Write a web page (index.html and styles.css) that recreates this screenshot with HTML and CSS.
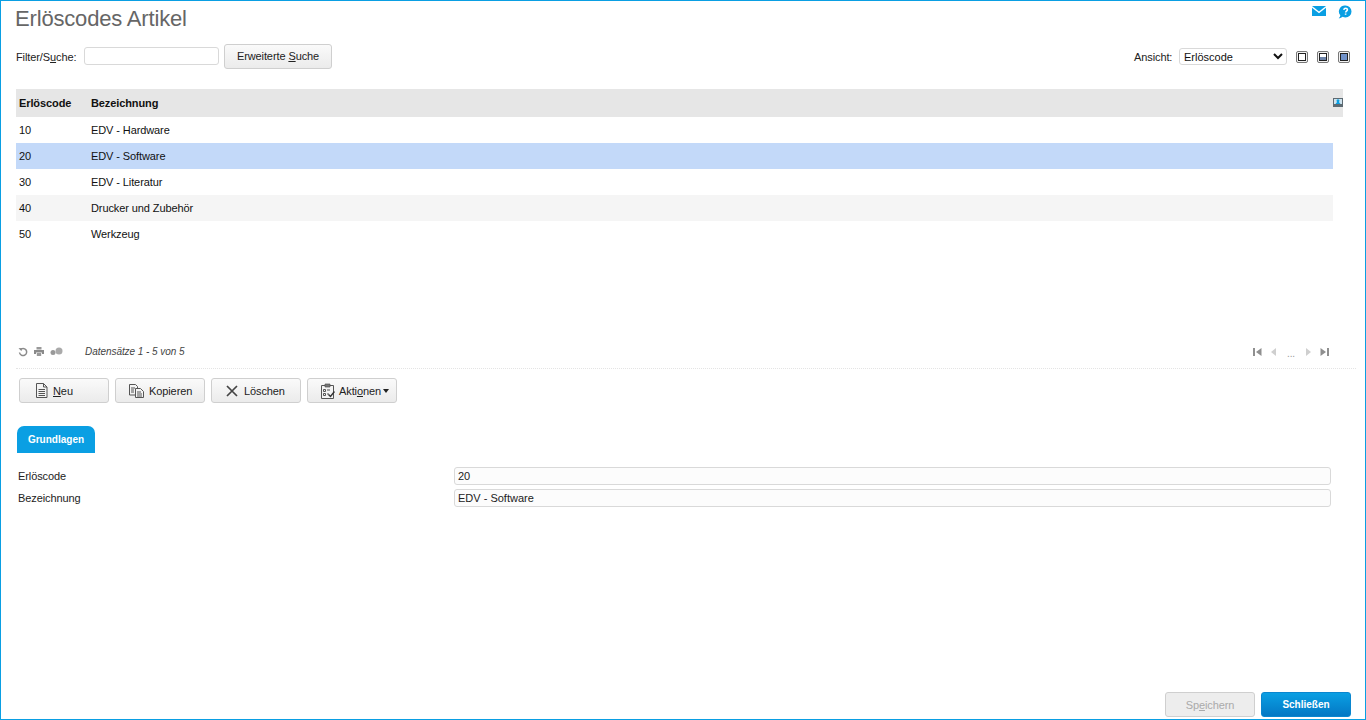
FILE: index.html
```html
<!DOCTYPE html>
<html lang="de">
<head>
<meta charset="utf-8">
<title>Erlöscodes Artikel</title>
<link rel="stylesheet" href="styles.css">
</head>
<body>
<div class="frame">
  <header class="head">
    <h1 class="title">Erlöscodes Artikel</h1>
    <div class="top-icons">
      <svg class="ic-mail" width="14" height="10" viewBox="0 0 14 10"><path d="M0 0h14L7 5.500z" fill="#0a9fe3"/><path d="M0 1.800 7 7.200l7-5.400V10H0z" fill="#0a9fe3"/></svg>
      <svg class="ic-help" width="14" height="14" viewBox="0 0 14 14"><path d="M7.500 0.500a6 6 0 0 1 0 12c-1 0-2-.2-2.800-.7-1 .9-2.500 1.500-4 1.500 1-.8 1.500-1.800 1.600-3A6 6 0 0 1 7.500.5z" fill="#0a9fe3"/><path d="M5.800 4.800c.2-1 .9-1.500 1.800-1.500 1.100 0 1.800.6 1.800 1.500 0 1.400-1.700 1.400-1.700 2.700M7.600 8.600v1.200" fill="none" stroke="#fff" stroke-width="1.600"/></svg>
    </div>
  </header>

  <div class="toolbar">
    <label class="lbl" for="q">Filter/S<u>u</u>che:</label>
    <input id="q" class="search" type="text">
    <button class="btn btn-search" type="button">Erweiterte <u>S</u>uche</button>
    <div class="view">
      <label class="lbl-view" for="v">Ansicht:</label>
      <select id="v" class="view-select"><option>Erlöscode</option></select>
      <span class="layout-btn"><i class="pane"></i></span>
      <span class="layout-btn"><i class="pane pane-half"></i></span>
      <span class="layout-btn"><i class="pane pane-full"></i></span>
    </div>
  </div>

  <section class="grid">
    <div class="grid-head">
      <span class="col-a">Erlöscode</span>
      <span class="col-b">Bezeichnung</span>
      <svg class="ic-cols" width="10" height="9" viewBox="0 0 10 9"><rect width="10" height="9" fill="#5d6a72"/><rect x="1" y="1" width="8" height="5" fill="#cfe3ee"/><path d="M5 1.200a1.500 1.500 0 0 1 1.500 1.500c0 .6-.3 1-.6 1.300l1.600 2H2.500l1.600-2c-.3-.3-.6-.7-.6-1.300A1.500 1.500 0 0 1 5 1.200z" fill="#0a9fe3"/></svg>
    </div>
    <div class="row"><span class="col-a">10</span><span class="col-b">EDV - Hardware</span></div>
    <div class="row row-sel"><span class="col-a">20</span><span class="col-b">EDV - Software</span></div>
    <div class="row"><span class="col-a">30</span><span class="col-b">EDV - Literatur</span></div>
    <div class="row row-alt"><span class="col-a">40</span><span class="col-b">Drucker und Zubehör</span></div>
    <div class="row"><span class="col-a">50</span><span class="col-b">Werkzeug</span></div>
  </section>

  <div class="pager">
    <div class="pager-tools">
      <svg width="10" height="10" viewBox="0 0 10 10"><path d="M2.200 2.800A3.600 3.600 0 1 1 1.500 5.500" fill="none" stroke="#8a8a8a" stroke-width="1.500"/><path d="M0.500 1l3.500.3-.5 3z" fill="#8a8a8a"/></svg>
      <svg width="10" height="9" viewBox="0 0 10 9"><path d="M2.500 0h5v2.500h-5z" fill="#999"/><path d="M0 3h10v4H8V5.500H2V7H0z" fill="#8a8a8a"/><path d="M2.800 6h4.400v3H2.800z" fill="#999"/></svg>
      <svg width="13" height="9" viewBox="0 0 13 9"><circle cx="3" cy="5.500" r="2.500" fill="#999"/><circle cx="9" cy="4" r="3.500" fill="#aaa"/></svg>
    </div>
    <span class="records">Datensätze 1 - 5 von 5</span>
    <div class="pager-nav">
      <svg width="9" height="8" viewBox="0 0 9 8"><path d="M0 0h2v8H0zM8.500 0v8L3 4z" fill="#8f8f8f"/></svg>
      <svg width="6" height="8" viewBox="0 0 6 8"><path d="M5 0v8L0 4z" fill="#cfcfcf"/></svg>
      <span class="dots">...</span>
      <svg width="6" height="8" viewBox="0 0 6 8"><path d="M1 0v8l5-4z" fill="#cfcfcf"/></svg>
      <svg width="9" height="8" viewBox="0 0 9 8"><path d="M9 0H7v8h2zM.5 0v8L6 4z" fill="#8f8f8f"/></svg>
    </div>
  </div>

  <div class="actions">
    <button class="btn btn-act btn-new" type="button">
      <svg width="13" height="15" viewBox="0 0 13 15"><path d="M1.500.5h7l3.500 3.500v10.500H1.500z" fill="#f4f4f4" stroke="#555"/><path d="M8.500.5V4H12M3.500 6.500h6.500M3.500 8.500h6.500M3.500 10.500h6.500M3.500 12.500h6.500" fill="none" stroke="#555"/></svg>
      <span><u>N</u>eu</span>
    </button>
    <button class="btn btn-act btn-copy" type="button">
      <svg width="15" height="14" viewBox="0 0 15 14"><path d="M.5.500h6l2 2v8.500h-8z" fill="#f4f4f4" stroke="#555"/><path d="M6.500 4.500h5l3 3v6h-8z" fill="#f4f4f4" stroke="#555"/><path d="M2 4h4M2 6h3M2 8h3M8 8h4M8 10h5M8 12h5" stroke="#555"/></svg>
      <span>Kopieren</span>
    </button>
    <button class="btn btn-act btn-del" type="button">
      <svg width="12" height="12" viewBox="0 0 12 12"><path d="M1 1l10 10M11 1 1 11" stroke="#444" stroke-width="1.700"/></svg>
      <span>Löschen</span>
    </button>
    <button class="btn btn-act btn-more" type="button">
      <svg width="14" height="16" viewBox="0 0 14 16"><path d="M.5 2.500h12v13H.5z" fill="#f4f4f4" stroke="#555"/><path d="M4 1h5v3H4z" fill="#777" stroke="#555" stroke-width=".7"/><path d="M2.500 6.500h2v2h-2zM2.500 10.500h2v2h-2zM6 7h3M6 11h2" fill="none" stroke="#555"/><path d="M7.500 11.500l2 2 4-5" fill="none" stroke="#333" stroke-width="1.500"/></svg>
      <span>Akti<u>o</u>nen</span><i class="caret"></i>
    </button>
  </div>

  <nav class="tabs"><span class="tab">Grundlagen</span></nav>

  <form class="form">
    <label class="form-lbl" for="f1">Erlöscode</label>
    <input id="f1" class="field" type="text" value="20">
    <label class="form-lbl" for="f2">Bezeichnung</label>
    <input id="f2" class="field" type="text" value="EDV - Software">
  </form>

  <footer class="foot">
    <button class="btn btn-foot btn-save" type="button">Sp<u>e</u>ichern</button>
    <button class="btn btn-foot btn-close" type="button">Schließen</button>
  </footer>
</div>
</body>
</html>
```
FILE: styles.css
```css
* { box-sizing: border-box; }
html, body { margin: 0; height: 100%; }
body {
  font-family: "Liberation Sans", Arial, sans-serif;
  font-size: 11px;
  letter-spacing: -0.1px;
  color: #111;
  background: #fff;
  overflow: hidden;
}
.frame {
  height: 720px;
  width: 1366px;
  border: 1px solid #0a9fe3;
  display: flex;
  flex-direction: column;
  padding: 0 14px 2px 15px;
}
.head {
  height: 43px;
  display: flex;
  justify-content: space-between;
  align-items: flex-start;
}
.title {
  margin: 5px 0 0 -1px;
  font-size: 22px;
  line-height: 26px;
  font-weight: 400;
  letter-spacing: -0.17px;
  color: #666;
}
.top-icons {
  display: flex;
  align-items: flex-start;
  gap: 12px;
  margin-top: 4px;
  margin-right: -1px;
}
.ic-mail { margin-top: 1px; }
.toolbar {
  height: 25px;
  display: flex;
  align-items: center;
}
.lbl { width: 68px; color: #222; }
.search {
  width: 135px;
  height: 18px;
  border: 1px solid #d9d9d9;
  border-radius: 3px;
  background: #fff;
  margin-top: -1px;
}
.btn {
  font-family: inherit;
  font-size: 11px;
  letter-spacing: inherit;
  color: #222;
  border: 1px solid #cfcfcf;
  border-radius: 3px;
  background: linear-gradient(#fafafa, #ebebeb);
  padding: 0;
  height: 25px;
}
.btn-search { width: 108px; margin-left: 5px; padding-bottom: 2px; }
.view { margin-left: auto; margin-right: 1px; display: flex; align-items: center; }
.lbl-view { color: #222; width: 45px; }
.view-select {
  width: 108px;
  height: 17px;
  font-family: inherit;
  font-size: 11px;
  color: #111;
  border: 1px solid #d9d9d9;
  border-radius: 3px;
  background: #fff;
  padding: 0;
  margin-right: 9px;
}
.layout-btn {
  width: 12px;
  height: 12px;
  border: 1px solid #777;
  border-radius: 2px;
  margin-right: 9px;
  padding: 1px;
  background: #f2f2f2;
  display: block;
}
.layout-btn:last-child { margin-right: 0; }
.pane { display: block; width: 100%; height: 100%; background: #fff; border: 1px solid #222; }
.pane-half { background: linear-gradient(#fff 50%, #6d83a8 50%); }
.pane-full { background: #6f91c9; }
.grid {
  margin-top: 20px;
  height: 251px;
  margin-right: 8px;
}
.grid-head {
  height: 28px;
  background: #e6e6e6;
  display: flex;
  align-items: center;
  font-weight: 700;
  color: #111;
}
.ic-cols { margin-left: auto; margin-top: -1px; }
.col-a { width: 72px; padding-left: 3px; flex: none; }
.col-b { flex: 1; padding-left: 3px; }
.row {
  height: 26px;
  margin-right: 10px;
  display: flex;
  align-items: center;
  color: #111;
}
.row-sel { background: #c3d9f9; }
.row-alt { background: #f5f5f5; }
.pager {
  height: 29px;
  padding: 1px 0 6px 2px;
  display: flex;
  align-items: center;
  border-bottom: 1px dotted #e4e4e4;
  width: 1340px;
}
.pager-tools { display: flex; align-items: center; gap: 6px; width: 67px; }
.records { font-style: italic; font-size: 10px; letter-spacing: -0.05px; color: #444; }
.pager-nav {
  margin-left: auto;
  margin-right: 27px;
  display: flex;
  align-items: center;
  gap: 9.500px;
}
.dots { font-size: 10px; color: #999; padding-top: 3px; }
.actions {
  margin-top: 9px;
  padding-left: 3px;
  display: flex;
  gap: 6px;
}
.btn-act {
  width: 90px;
  display: flex;
  align-items: center;
  gap: 5px;
}
.btn-new { padding-left: 15px; }
.btn-copy { padding-left: 13px; }
.btn-del { padding-left: 14px; gap: 6px; }
.btn-more { padding-left: 13px; gap: 4px; }
.caret {
  border: 3.500px solid transparent;
  border-top: 4px solid #222;
  border-bottom: 0;
  margin-left: -2px;
}
.tabs { margin-top: 23px; padding-left: 1px; }
.tab {
  display: block;
  width: 78px;
  height: 27px;
  line-height: 27px;
  text-align: center;
  font-size: 10px;
  letter-spacing: 0;
  font-weight: 700;
  color: #fff;
  background: #0a9fe3;
  border-radius: 7px 7px 0 0;
}
.form {
  margin-top: 14px;
  display: grid;
  grid-template-columns: 436px 877px;
  row-gap: 4px;
  padding-left: 2px;
  align-items: center;
}
.form-lbl { color: #222; }
.field {
  height: 18px;
  border: 1px solid #d9d9d9;
  border-radius: 3px;
  background: #fcfcfc;
  font-family: inherit;
  font-size: 11px;
  color: #222;
  padding: 0 3px;
}
.foot {
  margin-top: auto;
  display: flex;
  justify-content: flex-end;
  gap: 6px;
}
.btn-foot { width: 90px; }
.btn-save { color: #aaa; background: #ededed; }
.btn-close {
  color: #fff;
  font-size: 10px;
  letter-spacing: 0;
  font-weight: 700;
  border: 1px solid #0a86cf;
  background: linear-gradient(#0a9fe3, #0478c4);
}
```
